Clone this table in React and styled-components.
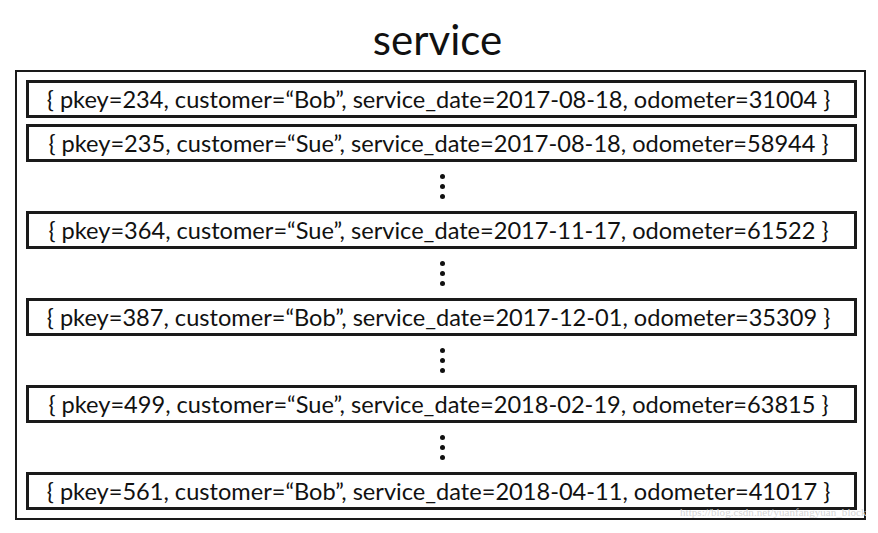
import styled, { createGlobalStyle } from "styled-components";

const GlobalStyle = createGlobalStyle`
  html, body {
    margin: 0;
    padding: 0;
    background: #ffffff;
  }
  body {
    font-family: Lato, "Open Sans", sans-serif;
    color: #111;
  }
`;

const Page = styled.div`
  position: relative;
  width: 878px;
  height: 533px;
  background: #fff;
`;

const Title = styled.h1`
  margin: 0;
  height: 70px;
  display: flex;
  align-items: flex-end;
  justify-content: center;
  padding-right: 3px;
  box-sizing: border-box;
  font-family: Lato, sans-serif;
  font-weight: 400;
  font-size: 42px;
  line-height: 1;
  padding-bottom: 10px;
  color: #111;
`;

const Table = styled.div`
  margin-left: 15px;
  width: 851px;
  box-sizing: border-box;
  border: 2px solid #1a1a1a;
  padding: 8px 7px 8px 9px;
  display: flex;
  flex-direction: column;
`;

const Row = styled.div`
  height: 38px;
  box-sizing: border-box;
  border: 3px solid #1a1a1a;
  display: flex;
  align-items: center;
  justify-content: center;
  font-family: Lato, sans-serif;
  font-size: 23.6px;
  white-space: nowrap;
  margin-top: ${(p) => (p.$tight ? "6px" : "0")};
  padding-right: 6px;
`;

const Ellipsis = styled.div`
  height: 49px;
  display: flex;
  flex-direction: column;
  align-items: center;
  justify-content: center;
  gap: 5px;
  padding-left: 1px;
`;

const Dot = styled.span`
  width: 5px;
  height: 5px;
  border-radius: 50%;
  background: #111;
`;

const Watermark = styled.div`
  position: absolute;
  left: 680px;
  top: 506px;
  font-family: "Liberation Serif", serif;
  font-size: 11px;
  color: #d6d6d6;
  letter-spacing: 0.05px;
  white-space: nowrap;
`;

const records = [
  { pkey: 234, customer: "Bob", date: "2017-08-18", odo: 31004 },
  { pkey: 235, customer: "Sue", date: "2017-08-18", odo: 58944, tight: true },
  { pkey: 364, customer: "Sue", date: "2017-11-17", odo: 61522 },
  { pkey: 387, customer: "Bob", date: "2017-12-01", odo: 35309 },
  { pkey: 499, customer: "Sue", date: "2018-02-19", odo: 63815 },
  { pkey: 561, customer: "Bob", date: "2018-04-11", odo: 41017 },
];

const Dots = () => (
  <Ellipsis>
    <Dot />
    <Dot />
    <Dot />
  </Ellipsis>
);

export default function App() {
  return (
    <Page>
      <GlobalStyle />
      <Title>service</Title>
      <Table>
        {records.map((r, i) => (
          <div key={r.pkey}>
            {i > 1 && <Dots />}
            <Row $tight={r.tight}>
              {`{ pkey=${r.pkey}, customer=\u201C${r.customer}\u201D, service_date=${r.date}, odometer=${r.odo} }`}
            </Row>
          </div>
        ))}
      </Table>
      <Watermark>https://blog.csdn.net/yuanfangyuan_block</Watermark>
    </Page>
  );
}
